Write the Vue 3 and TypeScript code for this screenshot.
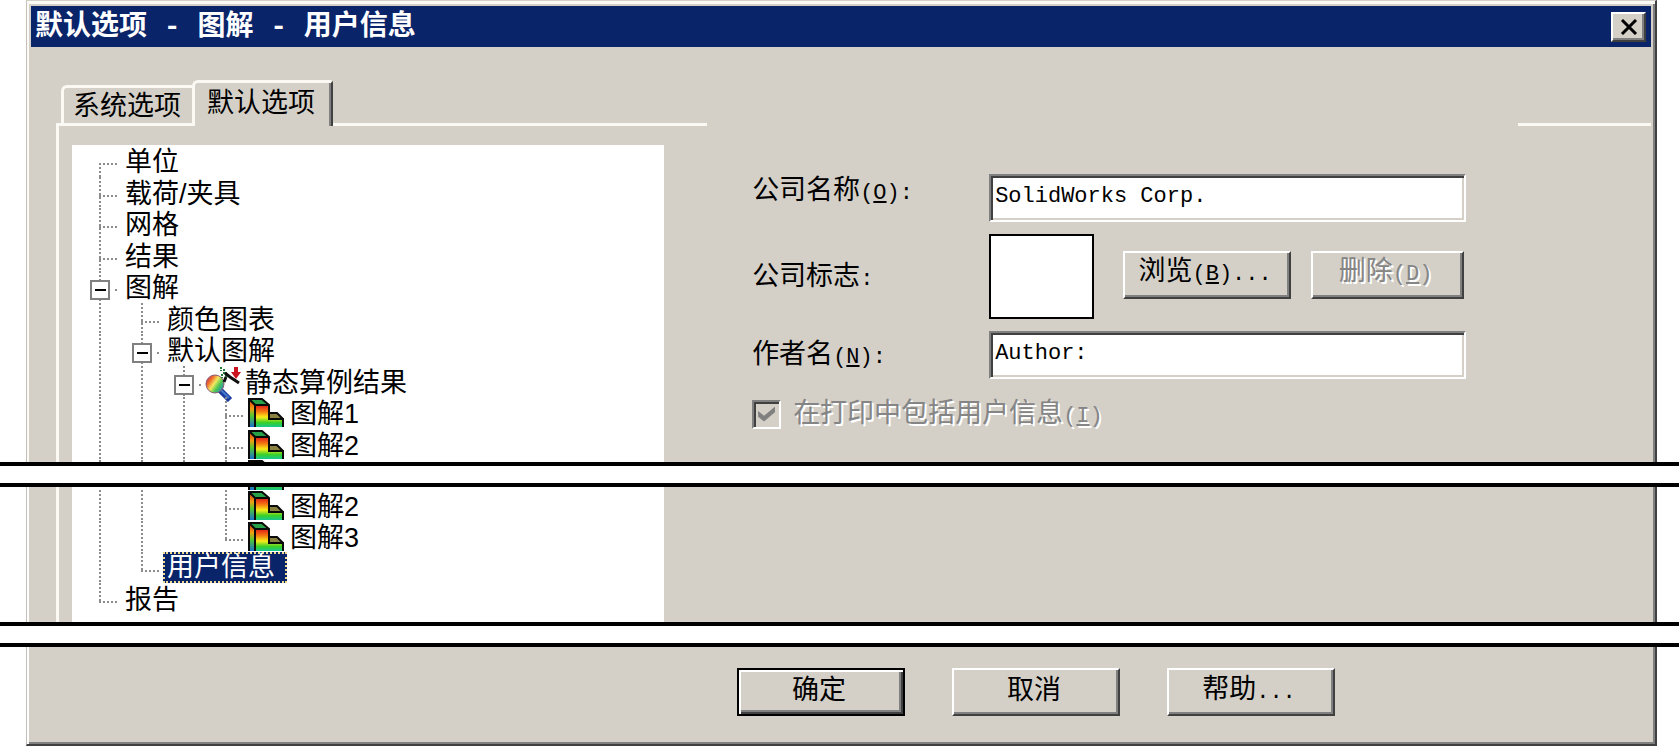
<script setup lang="ts">
import { ref } from 'vue'

type Guide = 'start' | 'tee' | 'pass' | 'last' | 'none'
type Icon = 'result' | 'plot'

interface TreeRow {
  label: string
  guides: Guide[]
  open?: boolean
  icon?: Icon
  selected?: boolean
}

const upperRows: TreeRow[] = [
  { label: '单位', guides: ['start'] },
  { label: '载荷/夹具', guides: ['tee'] },
  { label: '网格', guides: ['tee'] },
  { label: '结果', guides: ['tee'] },
  { label: '图解', guides: ['tee'], open: true },
  { label: '颜色图表', guides: ['pass', 'tee'] },
  { label: '默认图解', guides: ['pass', 'tee'], open: true },
  { label: '静态算例结果', guides: ['pass', 'pass', 'tee'], open: true, icon: 'result' },
  { label: '图解1', guides: ['pass', 'pass', 'pass', 'tee'], icon: 'plot' },
  { label: '图解2', guides: ['pass', 'pass', 'pass', 'tee'], icon: 'plot' },
]

const lowerRows: TreeRow[] = [
  { label: '图解2', guides: ['pass', 'pass', 'none', 'tee'], icon: 'plot' },
  { label: '图解3', guides: ['pass', 'pass', 'none', 'last'], icon: 'plot' },
  { label: '用户信息', guides: ['pass', 'last'], selected: true },
  { label: '报告', guides: ['last'] },
]

const treeParts = [upperRows, lowerRows]
const company = ref('SolidWorks Corp.')
const author = ref('Author:')
const includeInfo = ref(true)
</script>

<template>
  <svg class="defs" aria-hidden="true">
    <defs>
      <linearGradient id="stress" x1="0" y1="0" x2="0" y2="1">
        <stop offset="0" stop-color="#e01818" />
        <stop offset="0.3" stop-color="#f47a10" />
        <stop offset="0.55" stop-color="#f8ec18" />
        <stop offset="0.8" stop-color="#38d028" />
        <stop offset="1" stop-color="#18c890" />
      </linearGradient>
      <linearGradient id="side" x1="0" y1="0" x2="0" y2="1">
        <stop offset="0" stop-color="#d83010" />
        <stop offset="0.35" stop-color="#f0a010" />
        <stop offset="0.6" stop-color="#50c830" />
        <stop offset="1" stop-color="#1870d0" />
      </linearGradient>
      <linearGradient id="lens" x1="0" y1="0.1" x2="1" y2="0.8">
        <stop offset="0" stop-color="#a02878" />
        <stop offset="0.25" stop-color="#f06828" />
        <stop offset="0.48" stop-color="#f4e860" />
        <stop offset="0.7" stop-color="#50c850" />
        <stop offset="1" stop-color="#2080d0" />
      </linearGradient>
      <symbol id="icon-result" viewBox="0 0 36 36">
        <path d="M14 23l11 11" stroke="#1c3c9c" stroke-width="6" />
        <path d="M16 24l8 8" stroke="#4078d0" stroke-width="2" />
        <circle cx="10" cy="18" r="9" fill="url(#lens)" stroke="#8a5a70" />
        <path d="M16 1v4M19 3v5M17 8v4M21 6v5" stroke="#287838" stroke-width="2" stroke-dasharray="2 1" />
        <path d="M20 7l5 4 9 6M21 11l-2 5" fill="none" stroke="#101010" stroke-width="3" />
        <path d="M29 1h4v5h3l-5 7-5-7h3z" fill="#cc1420" />
      </symbol>
      <symbol id="icon-plot" viewBox="0 0 36 29">
        <path d="M1 1l6 6v22H1z" fill="url(#side)" />
        <path d="M1 1h13l7 6H7z" fill="#28a048" />
        <path d="M21 15h8l6 6H21z" fill="#8a8040" />
        <path d="M7 7h14v14h14v8H7z" fill="url(#stress)" />
        <path
          d="M1 29V1h13l7 6v14h14v8M1 1l6 6v22M7 7h14M21 15h8l6 6"
          fill="none"
          stroke="#0a0a0a"
          stroke-width="2"
        />
      </symbol>
    </defs>
  </svg>

  <main class="dialog">
    <section class="slice slice-top">
      <header class="titlebar">
        <h1>默认选项 - 图解 - 用户信息</h1>
        <button class="close" type="button" aria-label="关闭">
          <svg viewBox="0 0 18 16" aria-hidden="true">
            <path d="M2 1l14 14M16 1L2 15" stroke="#000" stroke-width="3" />
          </svg>
        </button>
      </header>

      <div class="tabs" role="tablist">
        <span class="lead"></span>
        <button class="tab" role="tab" type="button" aria-selected="false">系统选项</button>
        <button class="tab active" role="tab" type="button" aria-selected="true">默认选项</button>
        <span class="rule rule-mid"></span>
        <span class="blank"></span>
        <span class="rule rule-end"></span>
      </div>

      <div class="panel">
        <ul class="tree" role="tree">
          <li v-for="(row, i) in treeParts[0]" :key="i" class="row" role="treeitem">
            <span v-for="(g, j) in row.guides" :key="j" class="guide" :class="g">
              <button
                v-if="row.open && j === row.guides.length - 1"
                class="expander"
                type="button"
                aria-label="折叠"
              ></button>
            </span>
            <svg v-if="row.icon" class="icon" :class="row.icon" aria-hidden="true">
              <use :href="'#icon-' + row.icon" />
            </svg>
            <span class="label">{{ row.label }}</span>
          </li>
          <li class="row cut" aria-hidden="true">
            <span v-for="n in 4" :key="n" class="guide pass"></span>
            <svg class="icon plot"><use href="#icon-plot" /></svg>
          </li>
        </ul>

        <form class="form" @submit.prevent>
          <label class="caption first" for="company">公司名称<span class="key">(<u>O</u>):</span></label>
          <input id="company" v-model="company" class="field" type="text" />

          <span class="caption">公司标志<span class="key">:</span></span>
          <div class="logo-line">
            <div class="logo"></div>
            <button class="button browse" type="button">浏览<span class="key">(<u>B</u>)...</span></button>
            <button class="button remove" type="button" disabled>删除<span class="key">(<u>D</u>)</span></button>
          </div>

          <label class="caption" for="author">作者名<span class="key">(<u>N</u>):</span></label>
          <input id="author" v-model="author" class="field" type="text" />

          <label class="check">
            <input v-model="includeInfo" type="checkbox" disabled />
            <span class="caption">在打印中包括用户信息<span class="key">(<u>I</u>)</span></span>
          </label>
        </form>
      </div>
    </section>

    <div class="tear"></div>

    <section class="slice">
      <div class="panel">
        <ul class="tree lower" role="tree">
          <li class="row cut" aria-hidden="true">
            <span class="guide pass"></span>
            <span class="guide pass"></span>
            <span class="guide none"></span>
            <span class="guide pass"></span>
            <svg class="icon plot"><use href="#icon-plot" /></svg>
          </li>
          <li
            v-for="(row, i) in treeParts[1]"
            :key="i"
            class="row"
            role="treeitem"
            :aria-selected="row.selected"
          >
            <span v-for="(g, j) in row.guides" :key="j" class="guide" :class="g"></span>
            <svg v-if="row.icon" class="icon" :class="row.icon" aria-hidden="true">
              <use :href="'#icon-' + row.icon" />
            </svg>
            <span class="label" :class="{ selected: row.selected }">{{ row.label }}</span>
          </li>
        </ul>
      </div>
    </section>

    <div class="tear"></div>

    <section class="slice slice-bottom">
      <div class="actions">
        <button class="button default" type="button">确定</button>
        <button class="button" type="button">取消</button>
        <button class="button" type="button">帮助<span class="key">...</span></button>
      </div>
    </section>
  </main>
</template>

<style>
body {
  margin: 0;
  background: #fff;
}
</style>

<style scoped>
* {
  box-sizing: border-box;
}

.defs {
  position: absolute;
  width: 0;
  height: 0;
}

.dialog,
.dialog button,
.dialog input {
  font-family: 'Liberation Mono', 'Noto Sans CJK SC', monospace;
  font-size: 27px;
  line-height: 32px;
  color: #000;
}

.slice {
  margin: 0 22px 0 26px;
  background: #d4d0c8;
  border-left: 1px solid #c4c0b8;
  border-right: 2px solid #404040;
  box-shadow: inset 2px 0 #fff, inset -2px 0 #808080;
}

.slice-top {
  border-top: 1px solid #d4d0c8;
  box-shadow: inset 2px 3px #fbfaf6, inset -2px 0 #808080;
}

.slice-bottom {
  border-bottom: 2px solid #404040;
  box-shadow: inset 2px 0 #fff, inset -2px -2px #808080;
}

.tear {
  height: 25px;
  background: #fff;
  border-top: 4px solid #000;
  border-bottom: 4px solid #000;
}

.titlebar {
  display: flex;
  align-items: center;
  justify-content: space-between;
  height: 46px;
  margin: 0 4px;
  padding: 0 5px 0 4px;
  background: #0a246a;
  background-clip: padding-box;
  border-top: 5px solid transparent;
}

h1 {
  margin: 0;
  padding-top: 3px;
  font-size: 28px;
  font-weight: 700;
  line-height: 36px;
  color: #fff;
  white-space: nowrap;
}

.close {
  display: flex;
  align-items: center;
  justify-content: center;
  width: 35px;
  height: 30px;
  padding: 0;
  background: #d4d0c8;
  border: 2px solid;
  border-color: #fff #404040 #404040 #fff;
  box-shadow: inset -2px -2px #808080;
}

.close svg {
  width: 18px;
  height: 16px;
}

.tabs {
  display: flex;
  align-items: flex-end;
  margin: 33px 4px 0 29px;
}

.lead,
.rule {
  height: 3px;
  background: #faf9f3;
}

.lead {
  flex: none;
  width: 5px;
}

.rule-mid {
  flex: 374;
}

.blank {
  flex: 811;
}

.rule-end {
  flex: 133;
}

.tab {
  flex: none;
  width: 131px;
  height: 41px;
  padding: 4px 2px 0 0;
  white-space: nowrap;
  background: #d4d0c8;
  border: 3px solid #faf9f3;
  border-right: 0;
  border-radius: 6px 0 0 0;
}

.tab.active {
  width: 141px;
  height: 46px;
  padding: 0 4px 0 0;
  border-bottom: 0;
  border-right: 2px solid #404040;
  border-radius: 6px 3px 0 0;
  box-shadow: inset -2px 0 #808080;
}

.panel {
  display: grid;
  grid-template-columns: 3fr 5fr;
  margin: 0 4px 0 29px;
  padding-left: 13px;
  border-left: 3px solid #faf9f3;
}

.slice-top .panel {
  padding-top: 19px;
}

.tree {
  margin: 0;
  padding: 0 0 0 7px;
  list-style: none;
  background: #fff;
  font-family: 'Liberation Sans', 'Noto Sans CJK SC', sans-serif;
}

.tree.lower {
  padding-bottom: 8px;
}

.row {
  display: flex;
  height: 31px;
  line-height: 31px;
  white-space: nowrap;
}

.tree:not(.lower) .row:nth-child(odd) {
  height: 32px;
}

.tree .row.cut,
.tree:not(.lower) .row.cut:nth-child(odd) {
  height: 2px;
  overflow: hidden;
}

.tree.lower .row.cut {
  height: 3px;
  align-items: flex-end;
}

.guide {
  flex: none;
  width: 42px;
  background-repeat: no-repeat;
}

.pass {
  background-image: repeating-linear-gradient(#8c8c8c 0 2px, transparent 2px 4px);
  background-position: 20px 0;
  background-size: 2px 100%;
}

.tee,
.start,
.last {
  background-image: repeating-linear-gradient(#8c8c8c 0 2px, transparent 2px 4px),
    repeating-linear-gradient(90deg, #8c8c8c 0 2px, transparent 2px 4px);
  background-position: 20px 0, 20px 18px;
  background-size: 2px 100%, 20px 2px;
}

.start {
  background-position: 20px 18px, 20px 18px;
}

.last {
  background-size: 2px 18px, 20px 2px;
}

.expander {
  display: block;
  width: 26px;
  height: 20px;
  margin: 9px 8px 0;
  padding: 0;
  border: 0;
  background: linear-gradient(#000, #000) center / 11px 2px no-repeat,
    linear-gradient(#fff, #fff) center / 16px 16px no-repeat,
    linear-gradient(#808080, #808080) center / 20px 20px no-repeat,
    #fff;
}

.icon {
  flex: none;
  width: 36px;
  height: 36px;
}

.icon.plot {
  height: 29px;
  margin: 1px 2px 0 1px;
}

.cut .icon.plot {
  margin: 0 2px 0 1px;
}

.label {
  padding: 2px 12px 0 4px;
}

.label.selected {
  height: 31px;
  line-height: 27px;
  padding: 0 10px 0 2px;
  color: #fff;
  background: #0a246a;
  border: 2px dotted #f0dc90;
}

.form {
  display: grid;
  grid-template-columns: 237px minmax(0, 477px);
  align-content: start;
  align-items: center;
  row-gap: 12px;
  padding: 29px 0 0 88px;
}

.caption {
  padding-top: 4px;
  white-space: nowrap;
}

.caption.first {
  align-self: start;
  padding-top: 2px;
}

.key {
  font-size: 22px;
}

.dialog .field {
  width: 100%;
  height: 48px;
  padding: 0 4px 4px;
  background: #fff;
  border: 2px solid;
  border-color: #808080 #fff #fff #808080;
  border-radius: 0;
  box-shadow: inset 2px 2px #404040, inset -2px -2px #d4d0c8;
  font-size: 22px;
  outline: 0;
}

.logo-line {
  display: flex;
  align-items: center;
}

.logo {
  flex: none;
  width: 105px;
  height: 85px;
  margin-right: 29px;
  background: #fff;
  border: 2px solid #000;
}

.button {
  width: 168px;
  height: 48px;
  padding: 0 4px 0 0;
  white-space: nowrap;
  background: #d4d0c8;
  border: 2px solid;
  border-color: #fff #404040 #404040 #fff;
  box-shadow: inset -2px -2px #808080;
}

.logo-line .button {
  margin-bottom: 4px;
  padding-bottom: 2px;
}

.browse {
  margin-right: 20px;
}

.dialog .remove {
  width: 153px;
}

.dialog .remove,
.check {
  color: #858585;
  text-shadow: 2px 2px #fff;
}

.button.default {
  border-color: #000;
  box-shadow: inset 2px 2px #fff, inset -2px -2px #404040, inset -4px -4px #808080;
}

.check {
  grid-column: 1 / -1;
  display: flex;
  align-items: center;
  gap: 12px;
  margin-top: 4px;
}

.check input {
  flex: none;
  appearance: none;
  display: grid;
  place-items: center;
  width: 29px;
  height: 29px;
  margin: 0;
  border: 2px solid;
  border-color: #808080 #fff #fff #808080;
  box-shadow: inset 2px 2px #404040;
}

.check input:checked::after {
  content: '';
  width: 17px;
  height: 15px;
  background: #808080;
  clip-path: polygon(0 30%, 35% 62%, 100% 0, 100% 36%, 35% 100%, 0 68%);
}

.actions {
  display: flex;
  gap: 47px;
  padding: 21px 0 28px 710px;
}
</style>
